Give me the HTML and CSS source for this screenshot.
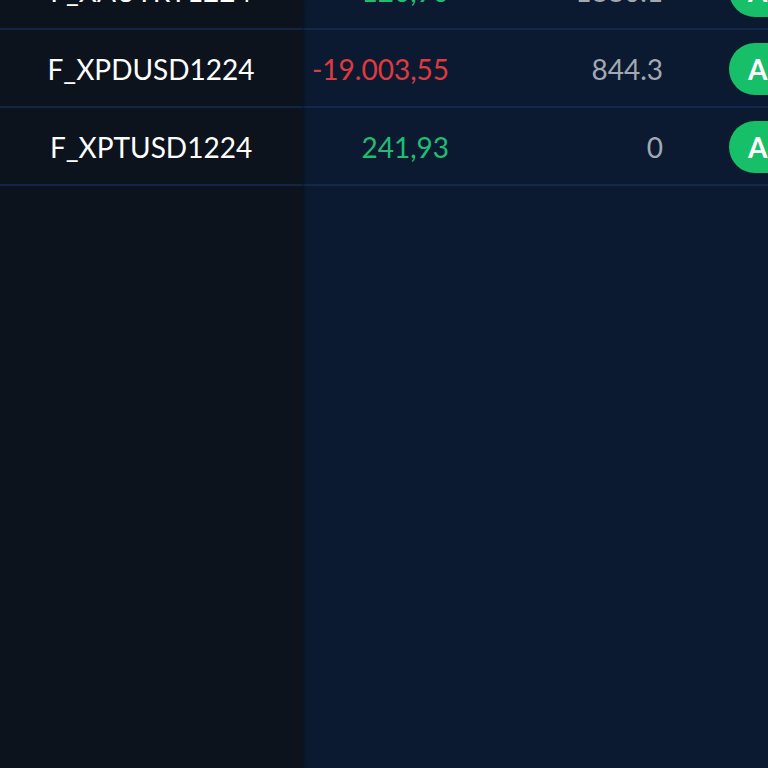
FILE: index.html
```html
<!DOCTYPE html>
<html lang="pt-br">
<head>
  <meta charset="UTF-8" />
  <meta name="viewport" content="width=device-width, initial-scale=1.0"/>
  <title>Posições</title>
  <link rel="stylesheet" href="styles.css">
</head>
<body>
  <main class="board">
    <div class="fixed-col">
      <div class="cell name first">F_XAUTRY1224</div>
      <div class="cell name">F_XPDUSD1224</div>
      <div class="cell name">F_XPTUSD1224</div>
    </div>
    <div class="scroll-col">
      <div class="row first">
        <span class="val up">120,90</span>
        <span class="vol">1880.1</span>
        <button class="act">Abrir</button>
      </div>
      <div class="row">
        <span class="val down">-19.003,55</span>
        <span class="vol">844.3</span>
        <button class="act">Abrir</button>
      </div>
      <div class="row">
        <span class="val up">241,93</span>
        <span class="vol">0</span>
        <button class="act">Abrir</button>
      </div>
    </div>
  </main>
</body>
</html>
```

FILE: styles.css
```css
:root {
  --fundo: #0b1a31;
  --coluna: #0d131d;
  --linha: #13284a;
  --verde: #1dbd74;
  --vermelho: #e0393e;
  --cinza: #a3a8b1;
}

* {
  box-sizing: border-box;
}

html, body {
  height: 100%;
}

body {
  margin: 0;
  overflow: hidden;
  font-family: "Lato", "Open Sans", sans-serif;
  background-color: var(--fundo);
  color: white;
}

.board {
  display: flex;
  height: 100%;
}

.fixed-col {
  width: 302px;
  flex-shrink: 0;
  background-color: var(--coluna);
  box-shadow: 2px 0 3px rgba(0,0,0,0.35);
  position: relative;
  z-index: 1;
}

.scroll-col {
  flex: 1;
  overflow: hidden;
}

.cell, .row {
  height: 78px;
  border-bottom: 2px solid var(--linha);
}

.first {
  margin-top: -48px;
}

.cell {
  display: flex;
  align-items: center;
  justify-content: center;
  padding-top: 2px;
  font-size: 28px;
  border-bottom-color: #132540;
}

.row {
  display: flex;
  align-items: center;
  padding-top: 2px;
  font-size: 28px;
}

.row > * {
  flex-shrink: 0;
}

.val {
  width: 147px;
  text-align: right;
}

.vol {
  width: 214px;
  text-align: right;
  color: var(--cinza);
}

.val.up {
  color: var(--verde);
}

.val.down {
  color: var(--vermelho);
}

.act {
  margin-left: 66px;
  height: 52px;
  padding: 0 19px;
  border: none;
  border-radius: 26px;
  background-color: #17bf69;
  color: white;
  font-family: inherit;
  font-size: 28px;
  font-weight: bold;
  white-space: nowrap;
}
```
